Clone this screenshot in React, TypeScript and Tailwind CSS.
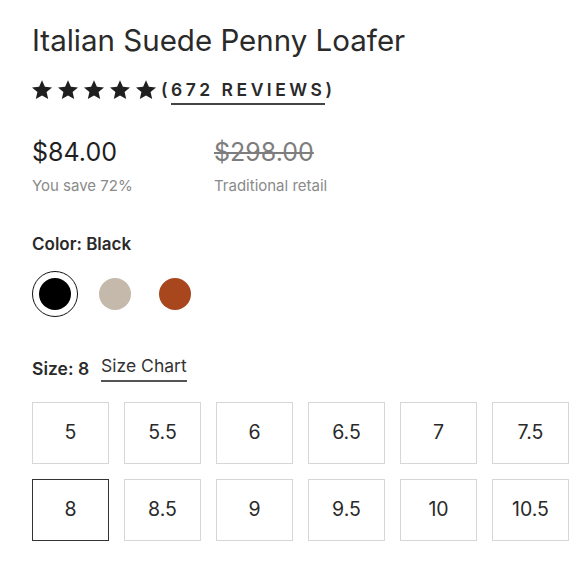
import React from 'react';

const sizes = ['5', '5.5', '6', '6.5', '7', '7.5', '8', '8.5', '9', '9.5', '10', '10.5'];

const Star = () => (
  <svg viewBox="2 2 20 20" className="w-[20px] h-[20px]" fill="#1f1f1f">
    <path d="M12 2.2l2.9 6.6 7.1.6-5.4 4.7 1.6 7-6.2-3.7-6.2 3.7 1.6-7L2 9.4l7.1-.6z" />
  </svg>
);

const App: React.FC = () => {
  const selected = '8';

  return (
    <div className="w-[580px] h-[580px] bg-white pl-8 pt-[21px] text-[#222]" style={{ fontFamily: 'Inter, "Liberation Sans", sans-serif' }}>
      {/* Title */}
      <h1 className="text-[29.5px] leading-[38px] font-normal text-[#2a2a2a]">Italian Suede Penny Loafer</h1>

      {/* Rating */}
      <div className="flex items-center mt-[21px] h-[20px]">
        <div className="flex gap-[6px]">
          <Star />
          <Star />
          <Star />
          <Star />
          <Star />
        </div>
        <span className="ml-[5px] text-[17.5px] font-semibold tracking-[3.5px] text-[#2a2a2a]">
          (<span className="border-b-2 border-[#444] pb-[3px]">672 REVIEWS</span>)
        </span>
      </div>

      {/* Pricing */}
      <div className="flex mt-[37px]">
        <div className="w-[182px]">
          <div className="text-[25px] leading-[30px] text-[#1f1f1f]">$84.00</div>
          <div className="text-[15px] leading-[20px] mt-[9px] text-[#8a8a8a]">You save 72%</div>
        </div>
        <div>
          <div className="text-[25px] leading-[30px] text-[#7d7d7d] line-through decoration-[2px]">$298.00</div>
          <div className="text-[15px] leading-[20px] mt-[9px] text-[#8a8a8a]">Traditional retail</div>
        </div>
      </div>

      {/* Color */}
      <div className="mt-[37px] text-[17px] leading-[22px] font-semibold text-[#2a2a2a]">Color: Black</div>
      <div className="flex items-center gap-[14px] mt-[16px]">
        <div className="w-[46px] h-[46px] rounded-full border-[1.5px] border-[#111] flex items-center justify-center">
          <div className="w-[32px] h-[32px] rounded-full bg-black" />
        </div>
        <div className="w-[46px] h-[46px] flex items-center justify-center">
          <div className="w-[32px] h-[32px] rounded-full bg-[#c4b9ab]" />
        </div>
        <div className="w-[46px] h-[46px] flex items-center justify-center">
          <div className="w-[32px] h-[32px] rounded-full bg-[#a8471d]" />
        </div>
      </div>

      {/* Size */}
      <div className="flex items-center mt-[38px] text-[17.5px] leading-[22px]">
        <span className="font-semibold text-[#2a2a2a]">Size: 8</span>
        <span className="ml-[12px] text-[#333] border-b-2 border-[#555] pb-[3px]">Size Chart</span>
      </div>

      <div className="grid grid-cols-[repeat(6,77px)] gap-x-[15px] gap-y-[15px] mt-[20px]">
        {sizes.map((s) => (
          <div
            key={s}
            className={
              s === selected
                ? 'h-[62px] border-[1.5px] border-[#333] flex items-center justify-center text-[19.5px] text-[#2a2a2a]'
                : 'h-[62px] border border-[#d6d6d6] flex items-center justify-center text-[19.5px] text-[#2a2a2a]'
            }
          >
            {s}
          </div>
        ))}
      </div>
    </div>
  );
};

export default App;
